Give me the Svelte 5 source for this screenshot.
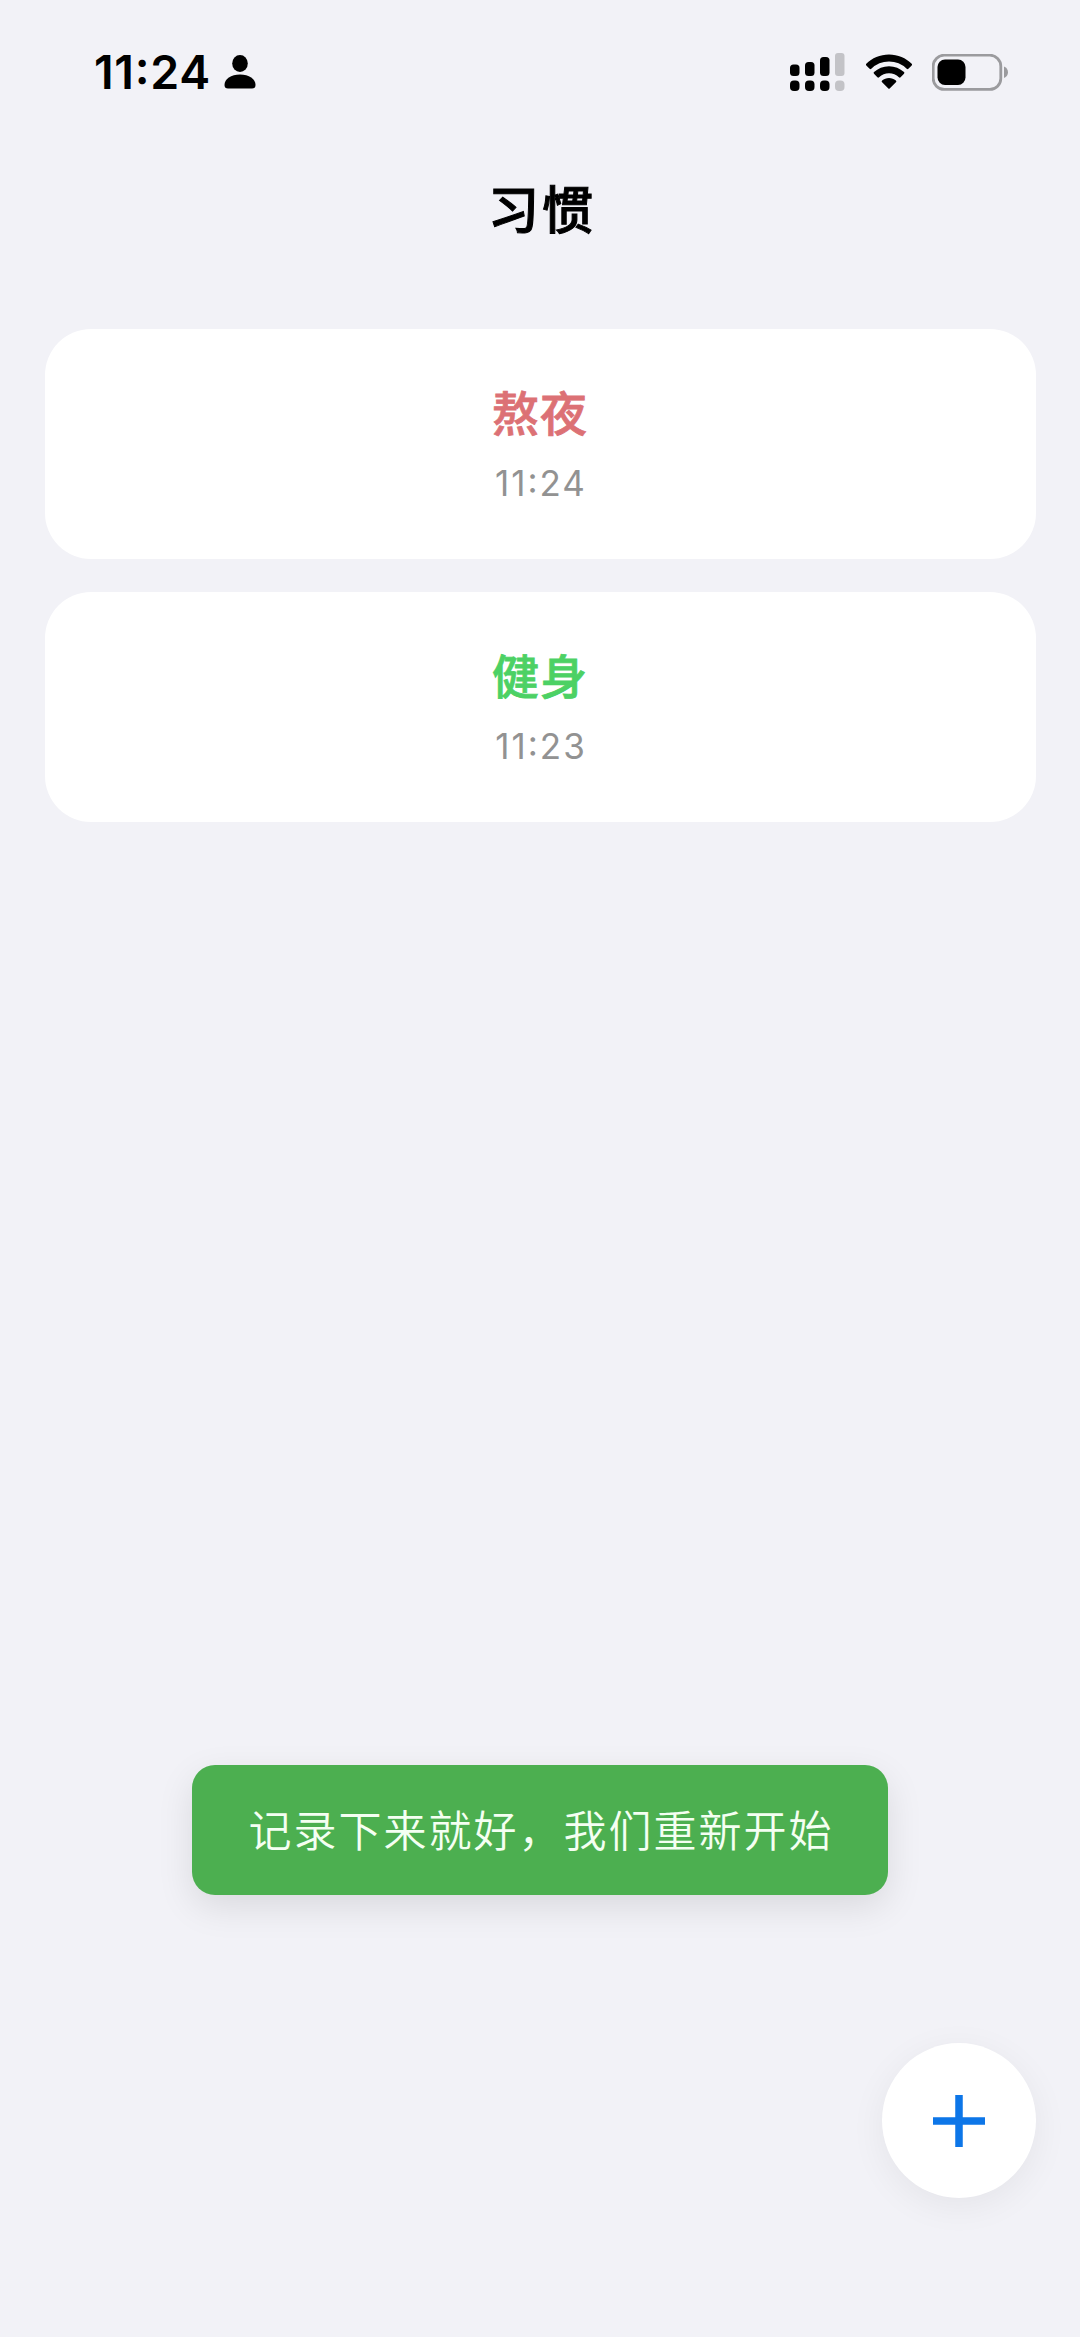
<script>
  const clock = '11:24';
  const message = '记录下来就好，我们重新开始';

  let habits = $state([
    { name: '熬夜', time: '11:24', kind: 'bad' },
    { name: '健身', time: '11:23', kind: 'good' }
  ]);
</script>

<div class="screen">
  <div class="status-bar">
    <div class="status-left">
      <span class="clock">{clock}</span>
      <svg class="person" width="32" height="34" viewBox="0 0 32 34">
        <ellipse cx="16" cy="8.5" rx="7.8" ry="8.4" />
        <path d="M0.500 30C0.500 24 7 19.500 16 19.500s15.500 4.500 15.500 10.500c0 2.500-1.200 3.500-3.500 3.500H4C1.700 33.500 0.500 32.500 0.500 30z" />
      </svg>
    </div>
    <div class="status-right">
      <svg width="55" height="38" viewBox="0 0 55 38">
        <rect x="0" y="11.500" width="9.500" height="11.500" rx="3.500" />
        <rect x="15" y="9" width="9.500" height="14" rx="3.500" />
        <rect x="30" y="4" width="9.500" height="19" rx="3.500" />
        <rect class="off" x="45" y="0" width="9.500" height="23" rx="3" />
        <rect x="0" y="27.500" width="9.500" height="10.500" rx="4" />
        <rect x="15" y="27.500" width="9.500" height="10.500" rx="4" />
        <rect x="30" y="27.500" width="9.500" height="10.500" rx="4" />
        <rect class="off" x="45" y="27.500" width="9.500" height="10.500" rx="4" />
      </svg>
      <svg class="wifi" width="48" height="36" viewBox="0 0 48 36">
        <path d="M24 0.500C15 0.500 7 4 1.300 9.800a1.200 1.200 0 0 0 0 1.700l3.300 3.200a1.200 1.200 0 0 0 1.700 0A25.500 25.500 0 0 1 24 7.500a25.500 25.500 0 0 1 17.700 7.200 1.200 1.200 0 0 0 1.700 0l3.300-3.200a1.200 1.200 0 0 0 0-1.700C41 4 33 0.500 24 0.500z" />
        <path d="M24 12.200c-5.800 0-11 2.200-15 5.900a1.200 1.200 0 0 0 0 1.700l3.400 3.400a1.200 1.200 0 0 0 1.700 0A14.500 14.500 0 0 1 24 19.200c3.800 0 7.300 1.500 9.900 4a1.200 1.200 0 0 0 1.700 0l3.400-3.400a1.200 1.200 0 0 0 0-1.700c-4-3.700-9.200-5.900-15-5.900z" />
        <path d="M24 24c-2.600 0-5 0.900-6.900 2.400a1.200 1.200 0 0 0 0 1.800l6 6.100a1.200 1.200 0 0 0 1.800 0l6-6.100a1.200 1.200 0 0 0 0-1.800C29 24.900 26.600 24 24 24z" />
      </svg>
      <svg class="battery" width="77" height="37" viewBox="0 0 77 37">
        <rect class="shell" x="1.200" y="1.200" width="67.600" height="34.200" rx="11" />
        <rect x="5.500" y="5.500" width="28" height="25.500" rx="7.500" />
        <path class="cap" d="M72 12.500c2.600 1 4 3.200 4 5.800s-1.400 4.800-4 5.800z" />
      </svg>
    </div>
  </div>

  <h1>习惯</h1>

  <div class="habit-list">
    {#each habits as habit}
      <div class="habit-card">
        <h2 class={habit.kind}>{habit.name}</h2>
        <p>{habit.time}</p>
      </div>
    {/each}
  </div>

  <div class="toast">{message}</div>

  <button class="add-btn" aria-label="添加">
    <svg width="52" height="52" viewBox="0 0 52 52">
      <path d="M26 0v52M0 26h52" />
    </svg>
  </button>
</div>

<style>
  :global(body) {
    background: #f2f2f7;
  }

  .screen {
    position: relative;
    box-sizing: border-box;
    width: 1080px;
    height: 2337px;
    overflow: hidden;
    background: #f2f2f7;
    font-family: Inter, 'Noto Sans CJK SC', sans-serif;
  }

  .status-bar {
    display: flex;
    justify-content: space-between;
    align-items: center;
    box-sizing: border-box;
    height: 144px;
    padding: 0 71px 0 94px;
  }

  .status-left,
  .status-right {
    display: flex;
    align-items: center;
  }

  .clock {
    font-size: 46.5px;
    font-weight: 600;
    line-height: 56px;
    letter-spacing: 0.7px;
    font-feature-settings: 'case';
  }

  .person {
    margin-left: 13px;
  }

  .off {
    fill: #c3c3c7;
  }

  .wifi {
    margin-left: 20px;
  }

  .battery {
    margin-left: 19px;
  }

  .shell {
    fill: none;
    stroke: #9b9b9e;
    stroke-width: 2.8;
  }

  .cap {
    fill: #9b9b9e;
  }

  h1 {
    margin: 30px 0 0;
    padding-left: 4px;
    font-size: 51px;
    font-weight: 500;
    line-height: 74px;
    letter-spacing: 3px;
    text-align: center;
    color: #000;
    -webkit-text-stroke: 1px currentColor;
  }

  .habit-list {
    display: flex;
    flex-direction: column;
    gap: 33px;
    margin-top: 81px;
    padding: 0 44.5px;
  }

  .habit-card {
    box-sizing: border-box;
    height: 230px;
    padding-top: 52px;
    border-radius: 46px;
    background: #fff;
    text-align: center;
  }

  h2 {
    margin: 0;
    font-size: 47px;
    font-weight: 500;
    line-height: 66px;
    letter-spacing: 1px;
    -webkit-text-stroke: 0.8px currentColor;
  }

  .bad {
    color: #dc7175;
  }

  .good {
    color: #4cd164;
  }

  .habit-card p {
    margin: 14px 0 0;
    padding-left: 2px;
    font-size: 35px;
    line-height: 44px;
    letter-spacing: 2px;
    font-feature-settings: 'case';
    color: #929292;
  }

  .toast {
    position: absolute;
    left: 192px;
    top: 1765px;
    box-sizing: border-box;
    width: 696px;
    height: 130px;
    padding-left: 2px;
    border-radius: 23px;
    background: #4caf50;
    box-shadow: 0 12px 36px rgba(0, 0, 0, 0.1);
    color: #f4fff2;
    font-size: 43px;
    font-weight: 350;
    line-height: 132px;
    letter-spacing: 2px;
    text-align: center;
    white-space: nowrap;
  }

  .add-btn {
    position: absolute;
    right: 44px;
    top: 2043px;
    display: flex;
    align-items: center;
    justify-content: center;
    width: 154px;
    height: 155px;
    padding: 0;
    border: none;
    border-radius: 50%;
    background: #fff;
    box-shadow: 0 8px 36px rgba(0, 0, 0, 0.06);
  }

  .add-btn path {
    fill: none;
    stroke: #0d76e8;
    stroke-width: 7.5;
  }
</style>
